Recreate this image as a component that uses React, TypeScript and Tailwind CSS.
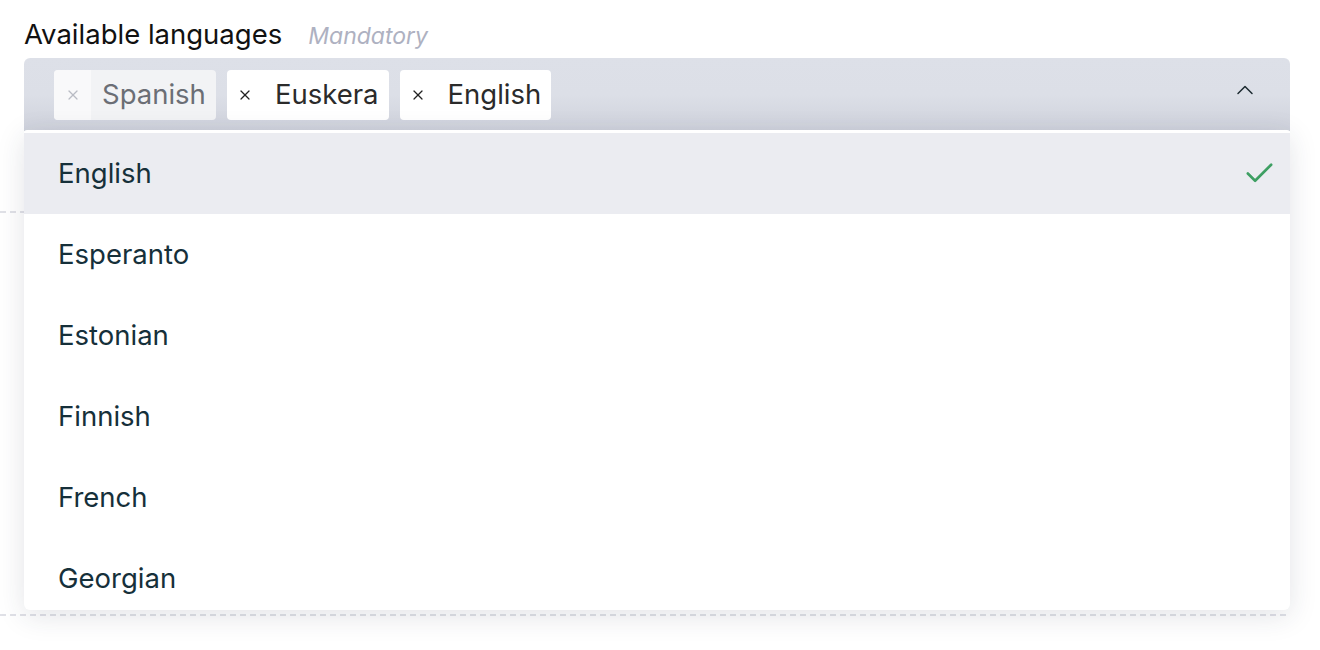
import { X, ChevronUp, Check } from 'lucide-react';

const options = ['English', 'Esperanto', 'Estonian', 'Finnish', 'French', 'Georgian'];

const chips = [
  { label: 'Spanish', disabled: true },
  { label: 'Euskera', disabled: false },
  { label: 'English', disabled: false },
];

function Chip({ label, disabled }: { label: string; disabled: boolean }) {
  return (
    <div
      className={`flex h-[50px] items-center rounded-[4px] overflow-hidden ${
        disabled ? 'bg-[#f2f3f5]' : 'bg-white'
      }`}
    >
      <span
        className={`flex h-full w-[37px] items-center justify-center ${
          disabled ? 'bg-[#f9f9fa] text-[#b9bcc4]' : 'text-[#222]'
        }`}
      >
        <X size={16} strokeWidth={1.8} />
      </span>
      <span
        className={`pl-[11px] pr-[10px] text-[27.5px] ${disabled ? 'text-[#6b6e75]' : 'text-[#2b2b2b]'}`}
      >
        {label}
      </span>
    </div>
  );
}

export default function App() {
  return (
    <div className="min-h-[650px] bg-white font-['Inter',sans-serif]">
      <div className="w-[1290px]">
        {/* Languages row */}
        <div className="relative pl-6 pt-[14px] pb-[80px]">
          <div className="flex items-baseline gap-[26px] leading-[41px]">
            <span className="text-[27.5px] text-[#111]">Available languages</span>
            <span className="text-[23px] italic text-[#aeb1c1]">Mandatory</span>
          </div>

          <div className="relative mt-[1px]">
            <div className="flex h-[73px] items-center justify-between rounded-t-[6px] bg-gradient-to-b from-[#dde0e8] via-[#dcdfe7] to-[#cfd2dc] pl-[30px] pr-[31px]">
              <div className="flex items-center gap-[11px]">
                {chips.map((c) => (
                  <Chip key={c.label} label={c.label} disabled={c.disabled} />
                ))}
              </div>
              <ChevronUp size={28} strokeWidth={1.3} className="mb-[9px] text-[#1f2d33]" />
            </div>

            {/* Dropdown */}
            <div className="absolute left-0 right-0 top-[72px] z-10 h-[480px] overflow-hidden rounded-b-[6px] rounded-t-[3px] bg-white pt-[3px] shadow-[0_6px_28px_rgba(40,45,70,0.13)]">
              {options.map((o, i) => (
                <div
                  key={o}
                  className={`flex h-[81px] items-center justify-between pl-[34px] pr-[13px] text-[27.5px] text-[#16303a] ${
                    i === 0 ? 'bg-[#ebecf1]' : ''
                  }`}
                >
                  <span>{o}</span>
                  {i === 0 && <Check size={35} strokeWidth={1.8} className="text-[#3e9f63]" />}
                </div>
              ))}
            </div>
          </div>
        </div>

        <div className="h-[2px] bg-[repeating-linear-gradient(90deg,#e0e1e7_0_6px,transparent_6px_10px)]" />

        <div className="h-[401px]" />
        <div className="h-[2px] bg-[repeating-linear-gradient(90deg,#e0e1e7_0_6px,transparent_6px_10px)]" />
      </div>
    </div>
  );
}
